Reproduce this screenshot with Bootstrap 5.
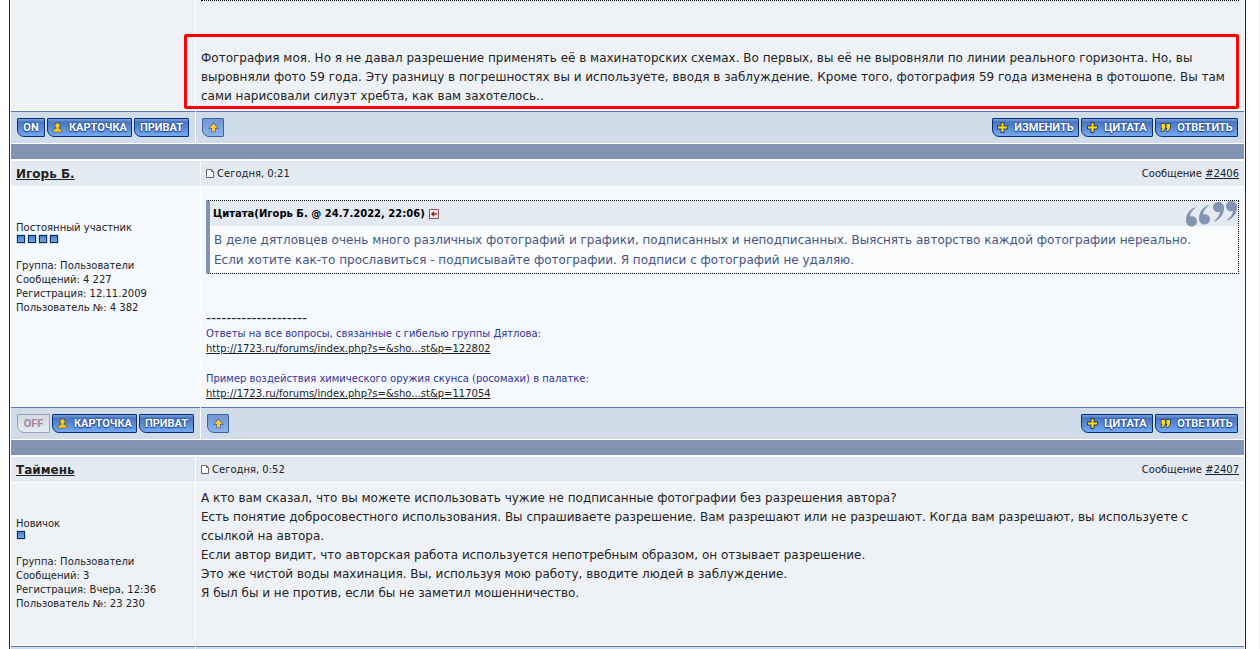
<!DOCTYPE html>
<html lang="ru">
<head>
<meta charset="utf-8">
<meta name="viewport" content="width=device-width, initial-scale=1">
<title>Форум</title>
<link href="https://cdn.jsdelivr.net/npm/bootstrap@5.3.0/dist/css/bootstrap.min.css" rel="stylesheet">
<style>
body { font-family: "DejaVu Sans", sans-serif; font-size: 10px; line-height: 14px; color: #222; background: #fff; }
a, a:hover { color: #222; }
.page-edge { border-right: 1px solid #f0f0f0; padding: 0 13px 0 9px; }
.forum { border: solid #072a66; border-width: 0 1px; padding: 0 1px; }
.post-row { display: grid; grid-template-columns: 184px minmax(0, 1fr); column-gap: 1px; }
.wide-user .post-row { grid-template-columns: 189px minmax(0, 1fr); }
.post-row > div { padding: 0 5px; }
.head-row { margin-top: 2px; min-height: 25px; }
.head-row > div { background: #e4eaf2; }
.body-row { margin-top: 1px; }
.body-row > div { background: #eef2f7; }
.wide-user .body-row > div { background: #f5f9fd; }
.foot-row { margin-top: 1px; min-height: 32px; }
.foot-row > div { background: #d1dceb; border-top: 1px solid #5176b5; padding: 0 6px; gap: 2px; }
.foot-row.cut { min-height: 0; }
.divider { margin-top: 1px; height: 15px; background: #8394b2; }
.author { font-size: 12px; line-height: 16px; font-weight: 700; }
.stamp { gap: 3px; }
.message { font-size: 12px; line-height: 19px; }
.post-row > .message.roomy { padding-top: 6px; }
.dots-top { border-top: 1px dotted #000; }
.frame { position: absolute; inset: -15px 0 -3px -17px; border: 3px solid #f00; border-radius: 2px; pointer-events: none; }
.fbtn { display: inline-flex; align-items: center; justify-content: center; height: 19px; padding: 0; border: 1px solid #0a2f72; border-radius: 1px 1px 1px 7px; background: linear-gradient(#7da6e6 0, #4874bd 3px, #74a9f2 100%); color: #fff; font: 700 11px/17px Roboto, sans-serif; text-shadow: 0 0 2px #123a80, 0 1px 1px #123a80; gap: 6px; white-space: nowrap; }
.fbtn:hover { color: #fff; }
.fbtn svg { width: 11px; height: 11px; overflow: visible; }
.w-on { width: 28px; } .w-off { width: 33px; } .w-card { width: 85px; } .w-pm { width: 55px; } .w-up { width: 22px; }
.w-edit { width: 87px; } .w-quote { width: 72px; } .w-reply { width: 83px; }
.fbtn.w-off { background: linear-gradient(#d4dbe6, #e4eaf2); border-color: #9aa3b3; color: #a88490; text-shadow: none; }
.fbtn.w-up { background: linear-gradient(#7396cf, #8ab4f0); border-color: #40609c; }
.post-row > .user-info { padding-top: 34px; }
.pips { gap: 3px; margin: 0 1px 16px; }
.pip { width: 8px; height: 8px; border: 1px solid #072a66; background: linear-gradient(#4b7fc9, #79a6e6); outline: 1px solid #d1dceb; }
.quote { margin: 13px 0 37px; border: 1px dotted #000; border-left: 4px solid #8394b2; background: #fbfcfe; }
.quote-head { height: 25px; padding-left: 3px; background: #e4eaf2; color: #000; }
.quote-text { padding: 4px 4px 3px; font-size: 12px; line-height: 20px; color: #465584; }
.signature { line-height: 15px; color: #339; padding-bottom: 5px; }
.sig-rule { font-size: 14px; color: #222; }
.last-body { min-height: 162px; }
</style>
</head>
<body>
<svg class="d-none" aria-hidden="true">
  <symbol id="i-page" viewBox="0 0 8 9"><path d="M.5.5h5l2 2v6h-7z" fill="#fff" stroke="#666"/><path d="M5.500.5v2h2" fill="none" stroke="#666"/></symbol>
  <symbol id="i-user" viewBox="0 0 11 11"><g paint-order="stroke" stroke="#3a4a60" stroke-width="1.500" fill="#fc1"><path d="M4.500 5h2v2L9.500 8v1.500h-8V8l3-1z"/><circle cx="5.500" cy="3.500" r="2.300"/><path d="M4.500 5h2v2L9.500 8v1.500h-8V8l3-1z" stroke="none"/></g></symbol>
  <symbol id="i-plus" viewBox="0 0 11 11"><path d="M4.500 1h2v3.500H10v2H6.500V10h-2V6.500H1v-2h3.500z" fill="#fd1" stroke="#24406e" stroke-width="2" paint-order="stroke"/></symbol>
  <symbol id="i-up" viewBox="0 0 11 11"><path d="M5.500 1.500 9.500 6H7v3.500H4V6H1.500z" fill="#fc3" stroke="#4b6590" stroke-width="1.500" paint-order="stroke"/></symbol>
  <symbol id="i-marks" viewBox="0 0 11 11"><path d="M1.500 2H5v4L3 9H1.500l.8-3h-.8zM6.500 2H10v4L8 9H6.500l.8-3h-.8z" fill="#fd1" stroke="#24406e" stroke-width="1.500" paint-order="stroke"/></symbol>
  <symbol id="i-jump" viewBox="0 0 10 10"><path d="M.5.5h9v9h-9z" fill="#f6eef2" stroke="#a04858"/><path d="M2 5l3-2.500V4.500h3v1H5v2z" fill="#822" stroke="#822" stroke-width=".4"/></symbol>
  <symbol id="i-big" viewBox="0 0 52 26">
    <g fill="#8394b2">
      <path id="q6" d="M9.500 6C3.500 8.500 0 13 0 19.500 0 23 2.300 25.500 5.500 25.500S11 23 11 20.200 8.800 15.200 5.800 15.200c-.8 0-1.300.1-1.800.4C4.500 12 6.500 9 9.800 6.600z"/>
      <use href="#q6" x="13" y="-2"/>
      <use href="#q6" transform="rotate(180 19 13.200)"/>
      <use href="#q6" transform="rotate(180 25.500 12.700)"/>
    </g>
  </symbol>
</svg>
<div class="page-edge min-vh-100 d-flex">
<main class="forum flex-fill d-flex flex-column">

  <article>
    <div class="post-row body-row mt-0">
      <div></div>
      <div class="message pb-1">
        <div class="dots-top"></div>
        <div class="position-relative mt-5">Фотография моя. Но я не давал разрешение применять её в махинаторских схемах. Во первых, вы её не выровняли по линии реального горизонта. Но, вы выровняли фото 59 года. Эту разницу в погрешностях вы и используете, вводя в заблуждение. Кроме того, фотография 59 года изменена в фотошопе. Вы там сами нарисовали силуэт хребта, как вам захотелось..<span class="frame"></span></div>
      </div>
    </div>
    <div class="post-row foot-row">
      <div class="d-flex align-items-center">
        <button class="btn fbtn w-on">ON</button>
        <button class="btn fbtn w-card"><svg><use href="#i-user"/></svg>КАРТОЧКА</button>
        <button class="btn fbtn w-pm">ПРИВАТ</button>
      </div>
      <div class="d-flex align-items-center">
        <button class="btn fbtn w-up me-auto" aria-label="Наверх"><svg><use href="#i-up"/></svg></button>
        <button class="btn fbtn w-edit"><svg><use href="#i-plus"/></svg>ИЗМЕНИТЬ</button>
        <button class="btn fbtn w-quote"><svg><use href="#i-plus"/></svg>ЦИТАТА</button>
        <button class="btn fbtn w-reply"><svg><use href="#i-marks"/></svg>ОТВЕТИТЬ</button>
      </div>
    </div>
    <div class="divider"></div>
  </article>

  <article class="wide-user">
    <div class="post-row head-row">
      <div class="d-flex align-items-center"><a class="author" href="#">Игорь Б.</a></div>
      <div class="d-flex align-items-center justify-content-between">
        <span class="stamp d-flex align-items-center"><svg width="8" height="9"><use href="#i-page"/></svg>Сегодня, 0:21</span>
        <span>Сообщение <a href="#">#2406</a></span>
      </div>
    </div>
    <div class="post-row body-row">
      <div class="user-info">
        <div>Постоянный участник</div>
        <div class="d-flex pips"><span class="pip"></span><span class="pip"></span><span class="pip"></span><span class="pip"></span></div>
        <div>Группа: Пользователи</div>
        <div>Сообщений: 4 227</div>
        <div>Регистрация: 12.11.2009</div>
        <div>Пользователь №: 4 382</div>
      </div>
      <div class="d-flex flex-column">
        <div class="quote">
          <div class="quote-head d-flex align-items-center">
            <b>Цитата(Игорь Б. @ 24.7.2022, 22:06)</b>
            <a class="d-flex ms-1 me-auto" href="#" aria-label="К сообщению"><svg width="10" height="10"><use href="#i-jump"/></svg></a>
            <svg width="52" height="26"><use href="#i-big"/></svg>
          </div>
          <div class="quote-text">В деле дятловцев очень много различных фотографий и графики, подписанных и неподписанных. Выяснять авторство каждой фотографии нереально.<br>Если хотите как-то прославиться - подписывайте фотографии. Я подписи с фотографий не удаляю.</div>
        </div>
        <div class="signature">
          <div class="sig-rule">--------------------</div>
          <div>Ответы на все вопросы, связанные с гибелью группы Дятлова:</div>
          <div><a href="#">http://1723.ru/forums/index.php?s=&amp;sho...st&amp;p=122802</a></div>
          <br>
          <div>Пример воздействия химического оружия скунса (росомахи) в палатке:</div>
          <div><a href="#">http://1723.ru/forums/index.php?s=&amp;sho...st&amp;p=117054</a></div>
        </div>
      </div>
    </div>
    <div class="post-row foot-row">
      <div class="d-flex align-items-center">
        <button class="btn fbtn w-off">OFF</button>
        <button class="btn fbtn w-card"><svg><use href="#i-user"/></svg>КАРТОЧКА</button>
        <button class="btn fbtn w-pm">ПРИВАТ</button>
      </div>
      <div class="d-flex align-items-center">
        <button class="btn fbtn w-up me-auto" aria-label="Наверх"><svg><use href="#i-up"/></svg></button>
        <button class="btn fbtn w-quote"><svg><use href="#i-plus"/></svg>ЦИТАТА</button>
        <button class="btn fbtn w-reply"><svg><use href="#i-marks"/></svg>ОТВЕТИТЬ</button>
      </div>
    </div>
    <div class="divider"></div>
  </article>

  <article class="flex-fill d-flex flex-column">
    <div class="post-row head-row">
      <div class="d-flex align-items-center"><a class="author" href="#">Таймень</a></div>
      <div class="d-flex align-items-center justify-content-between">
        <span class="stamp d-flex align-items-center"><svg width="8" height="9"><use href="#i-page"/></svg>Сегодня, 0:52</span>
        <span>Сообщение <a href="#">#2407</a></span>
      </div>
    </div>
    <div class="post-row body-row last-body">
      <div class="user-info">
        <div>Новичок</div>
        <div class="d-flex pips"><span class="pip"></span></div>
        <div>Группа: Пользователи</div>
        <div>Сообщений: 3</div>
        <div>Регистрация: Вчера, 12:36</div>
        <div>Пользователь №: 23 230</div>
      </div>
      <div class="message roomy">А кто вам сказал, что вы можете использовать чужие не подписанные фотографии без разрешения автора?<br>Есть понятие добросовестного использования. Вы спрашиваете разрешение. Вам разрешают или не разрешают. Когда вам разрешают, вы используете с ссылкой на автора.<br>Если автор видит, что авторская работа используется непотребным образом, он отзывает разрешение.<br>Это же чистой воды махинация. Вы, используя мою работу, вводите людей в заблуждение.<br>Я был бы и не против, если бы не заметил мошенничество.</div>
    </div>
    <div class="post-row foot-row cut flex-fill">
      <div></div>
      <div></div>
    </div>
  </article>
</main>
</div>
<script src="https://cdn.jsdelivr.net/npm/bootstrap@5.3.0/dist/js/bootstrap.bundle.min.js"></script>
</body>
</html>
